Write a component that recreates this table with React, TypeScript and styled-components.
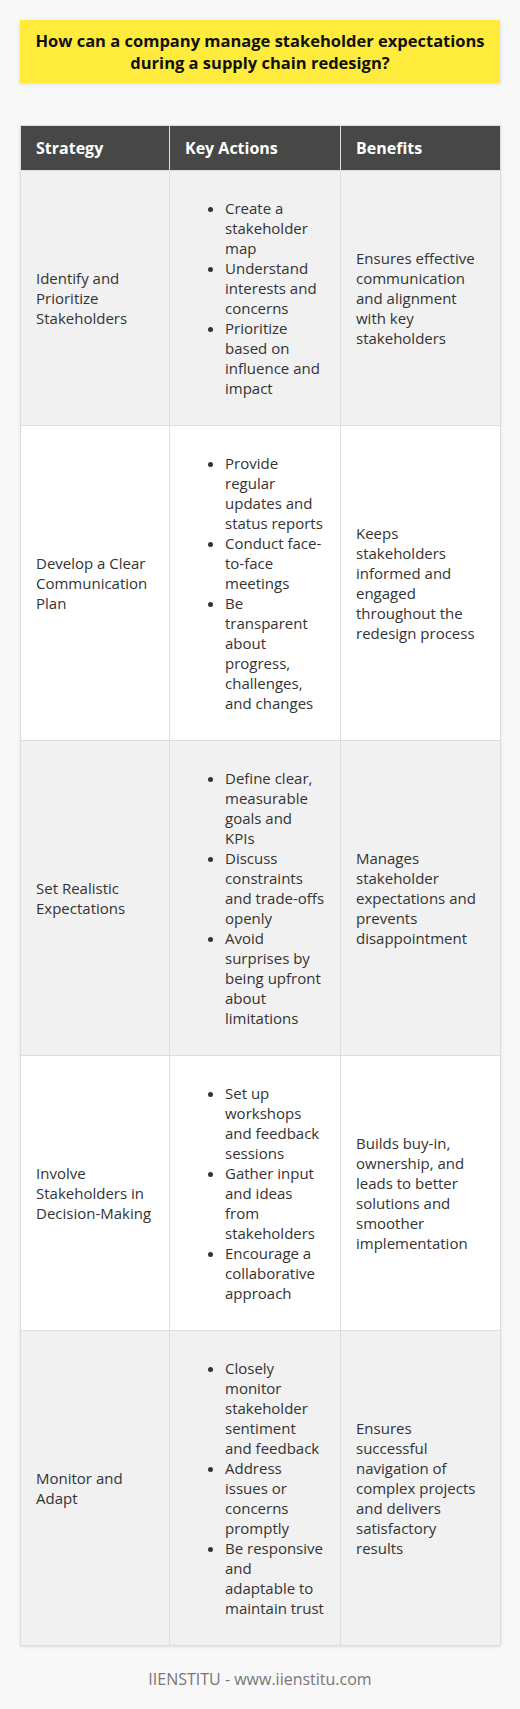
import React from 'react';
import styled, { createGlobalStyle } from 'styled-components';

const GlobalStyle = createGlobalStyle`
    html, body {
        margin: 0;
        padding: 0;
        background: #f8f8f8;
    }

    body {
        font-family: 'Open Sans', 'Noto Sans', sans-serif;
        color: #333;
    }
`;

const Page = styled.div`
    display: flex;
    flex-direction: column;
    padding: 20px 20px 0;
    min-height: 1709px;
    box-sizing: border-box;
`;

const Title = styled.h1`
    margin: 0;
    padding: 10px 2px;
    background: #ffeb3b;
    box-shadow: 0 1px 4px rgba(0, 0, 0, 0.12);
    font-size: 16.5px;
    line-height: 21.5px;
    font-weight: 700;
    color: #111;
    text-align: center;
`;

const Table = styled.table`
    width: 480px;
    margin-top: 42px;
    border-collapse: collapse;
    table-layout: fixed;
    box-shadow: 0 1px 3px rgba(0, 0, 0, 0.1);
`;

const HeadCell = styled.th`
    padding: 12px 15px;
    background: #474747;
    color: #fff;
    font-size: 16px;
    line-height: 20px;
    font-weight: 700;
    text-align: left;
    border: 1px solid #ddd;
`;

const Row = styled.tr<{ $odd: boolean }>`
    background: ${p => (p.$odd ? '#f1f1f1' : '#fff')};
`;

const Cell = styled.td`
    padding: 12px 15px;
    font-size: 15px;
    line-height: 20px;
    color: #333;
    vertical-align: middle;
    border: 1px solid #ddd;
`;

const Actions = styled.ul`
    margin: 15px 0;
    padding-left: 40px;
`;

const Footer = styled.div`
    padding: 22px 0;
    text-align: center;
    font-size: 16px;
    color: #777;
`;

const rows = [
    {
        strategy: 'Identify and Prioritize Stakeholders',
        actions: ['Create a stakeholder map', 'Understand interests and concerns', 'Prioritize based on influence and impact'],
        benefit: 'Ensures effective communication and alignment with key stakeholders',
    },
    {
        strategy: 'Develop a Clear Communication Plan',
        actions: ['Provide regular updates and status reports', 'Conduct face-to-face meetings', 'Be transparent about progress, challenges, and changes'],
        benefit: 'Keeps stakeholders informed and engaged throughout the redesign process',
    },
    {
        strategy: 'Set Realistic Expectations',
        actions: ['Define clear, measurable goals and KPIs', 'Discuss constraints and trade-offs openly', 'Avoid surprises by being upfront about limitations'],
        benefit: 'Manages stakeholder expectations and prevents disappointment',
    },
    {
        strategy: 'Involve Stakeholders in Decision-Making',
        actions: ['Set up workshops and feedback sessions', 'Gather input and ideas from stakeholders', 'Encourage a collaborative approach'],
        benefit: 'Builds buy-in, ownership, and leads to better solutions and smoother implementation',
    },
    {
        strategy: 'Monitor and Adapt',
        actions: ['Closely monitor stakeholder sentiment and feedback', 'Address issues or concerns promptly', 'Be responsive and adaptable to maintain trust'],
        benefit: 'Ensures successful navigation of complex projects and delivers satisfactory results',
    },
];

const App = () => (
    <Page>
        <GlobalStyle />
        <Title>How can a company manage stakeholder expectations during a supply chain redesign?</Title>
        <Table>
            <colgroup>
                <col style={{ width: 149 }} />
                <col style={{ width: 171 }} />
                <col style={{ width: 160 }} />
            </colgroup>
            <thead>
                <tr>
                    <HeadCell>Strategy</HeadCell>
                    <HeadCell>Key Actions</HeadCell>
                    <HeadCell>Benefits</HeadCell>
                </tr>
            </thead>
            <tbody>
                {rows.map((row, i) =>
                    <Row key={row.strategy} $odd={i % 2 === 0}>
                        <Cell>{row.strategy}</Cell>
                        <Cell>
                            <Actions>
                                {row.actions.map(action => <li key={action}>{action}</li>)}
                            </Actions>
                        </Cell>
                        <Cell>{row.benefit}</Cell>
                    </Row>
                )}
            </tbody>
        </Table>
        <Footer>IIENSTITU - www.iienstitu.com</Footer>
    </Page>
);

export default App;
